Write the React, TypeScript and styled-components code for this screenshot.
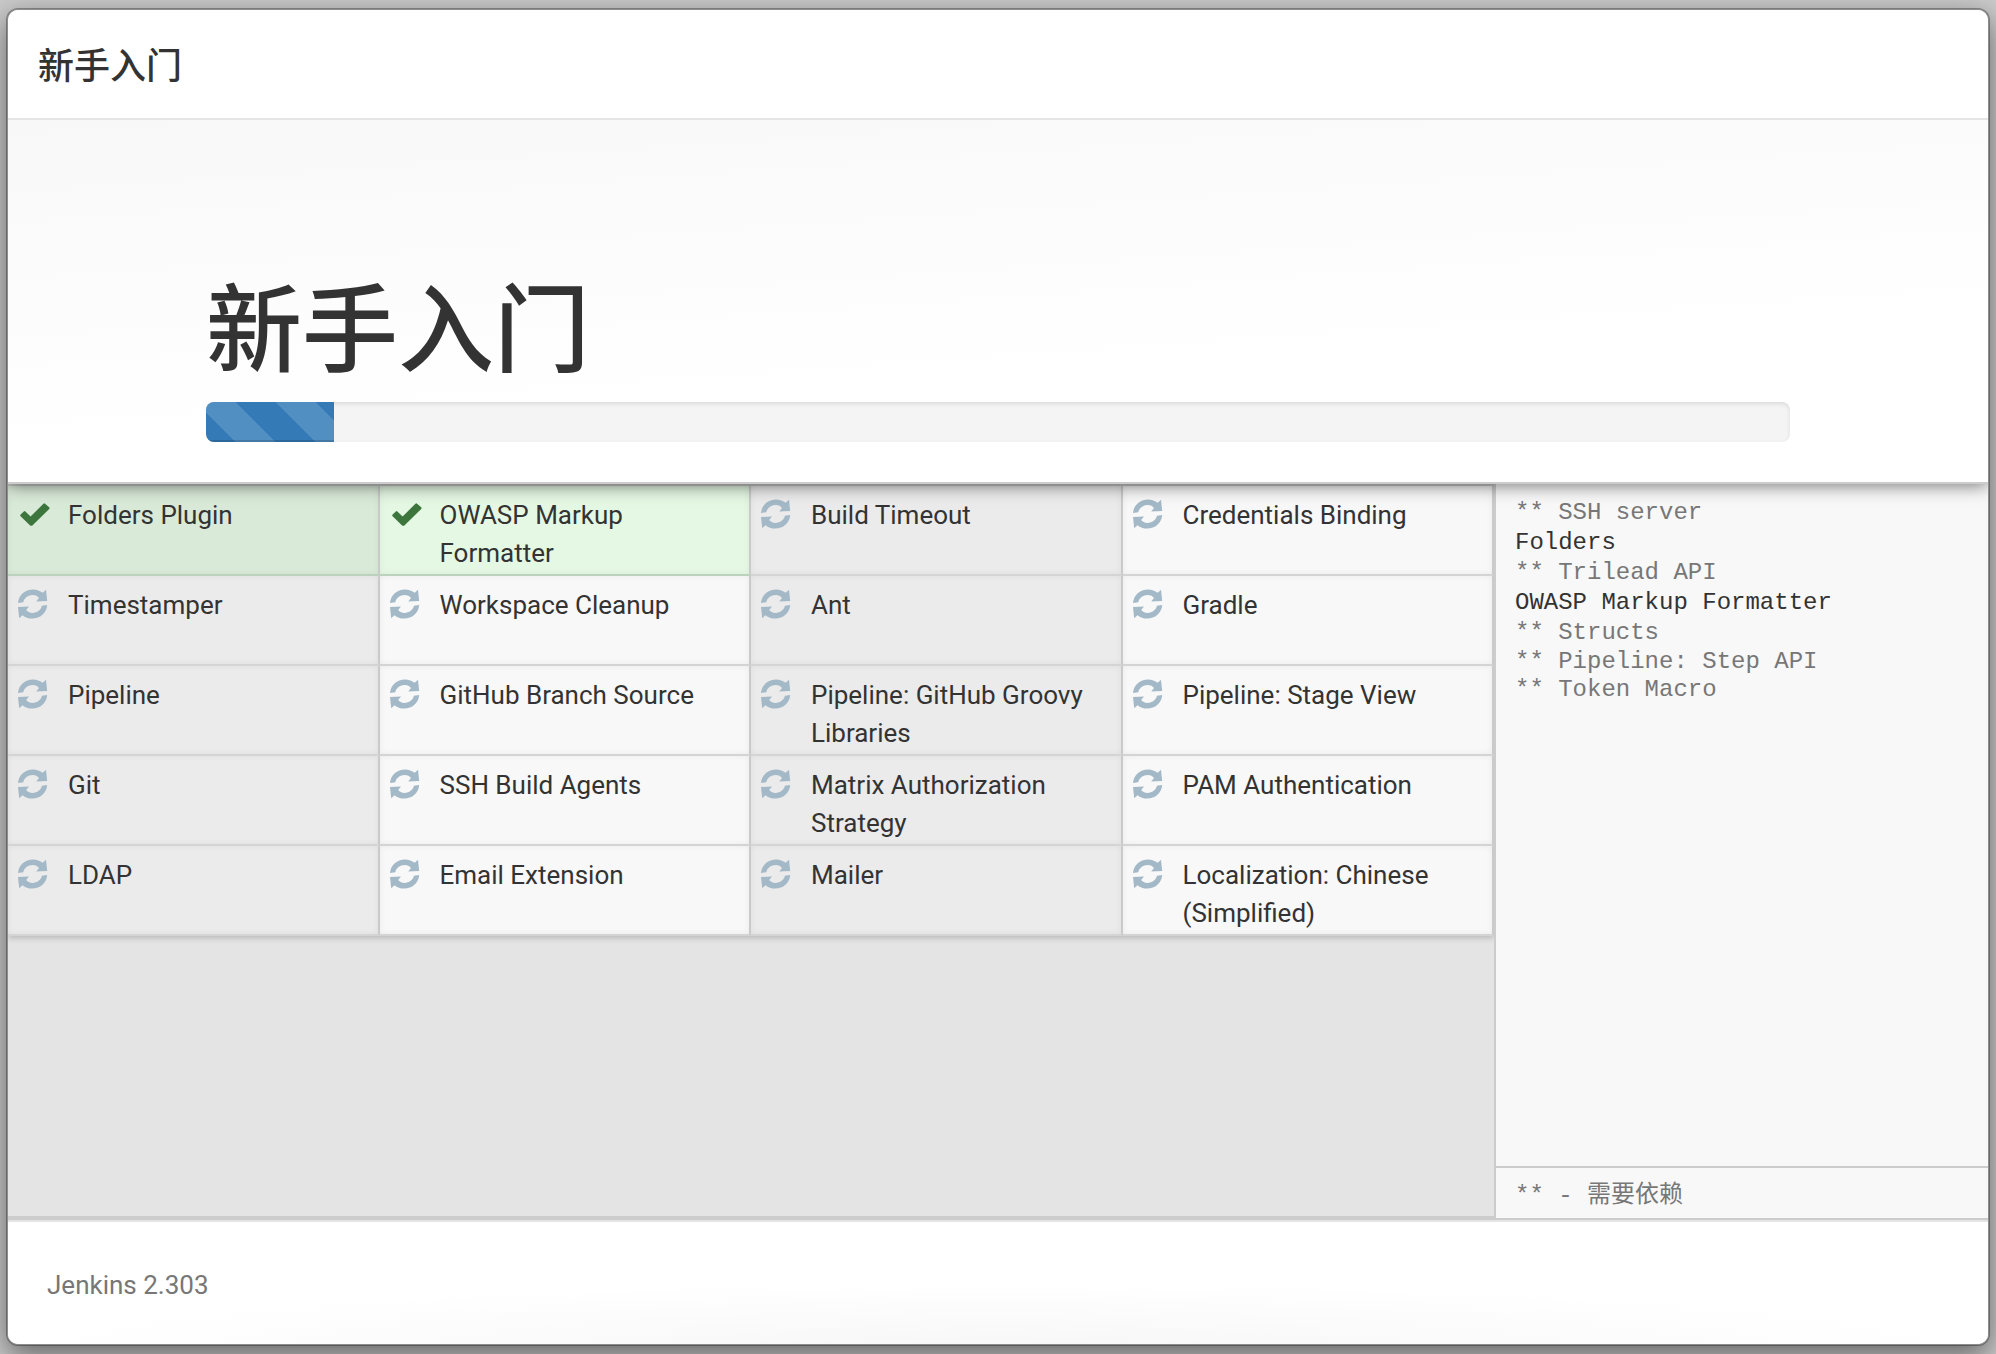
import React from "react";
import styled, { createGlobalStyle, css } from "styled-components";

const sans = `Roboto, "Noto Sans CJK SC", sans-serif`;
const mono = `"Liberation Mono", "Noto Sans CJK SC", monospace`;

const GlobalStyle = createGlobalStyle`
  *, *::before, *::after { box-sizing: border-box; }
  html, body, #root { height: 100%; }
  body {
    margin: 0;
    background: #cbcbcb;
    color: #333;
    font-family: ${sans};
    font-size: 26px;
    line-height: 38px;
  }
`;

const Backdrop = styled.div`
  display: flex;
  min-height: 100%;
  padding: 8px 6px;
`;

const Dialog = styled.main`
  flex: 1;
  min-width: 0;
  display: flex;
  flex-direction: column;
  overflow: hidden;
  border: 2px solid rgba(0, 0, 0, 0.3);
  border-radius: 12px;
  background: #fff;
  background-clip: padding-box;
  box-shadow: 0 10px 30px rgba(0, 0, 0, 0.5);
`;

const Header = styled.header`
  position: relative;
  z-index: 2;
  padding: 31px 30px 25px;
  border-bottom: 2px solid #e5e5e5;
  background: #fff;
`;

const HeaderTitle = styled.h4`
  margin: 0;
  font-size: 36px;
  font-weight: 500;
  line-height: 52px;
`;

const Jumbotron = styled.section`
  position: relative;
  z-index: 1;
  padding: 155px 10% 40px;
  border-bottom: 2px solid #ccc;
  background: linear-gradient(176deg, #f8f8f8, #fff 65%);
  box-shadow: 0 2px 16px rgba(0, 0, 0, 0.5);
`;

const HeroTitle = styled.h1`
  margin: 0 0 15px;
  font-size: 96px;
  font-weight: 500;
  line-height: 112px;
`;

const Progress = styled.div`
  height: 40px;
  overflow: hidden;
  border-radius: 8px;
  background: #f4f4f4;
  box-shadow: inset 0 2px 4px rgba(0, 0, 0, 0.1);
`;

const ProgressBar = styled.div`
  height: 100%;
  background-color: #337ab7;
  background-image: linear-gradient(
    45deg,
    rgba(255, 255, 255, 0.15) 25%,
    transparent 25%,
    transparent 50%,
    rgba(255, 255, 255, 0.15) 50%,
    rgba(255, 255, 255, 0.15) 75%,
    transparent 75%
  );
  background-size: 80px 80px;
  background-position: -10px 0;
  box-shadow: inset 0 -2px 0 rgba(0, 0, 0, 0.15);
`;

const Body = styled.div`
  flex: 1;
  display: flex;
  border-bottom: 2px solid #e5e5e5;
`;

const Selection = styled.div`
  flex: 1;
  min-width: 0;
  border-top: 2px solid #ccc;
  border-bottom: 4px solid #ccc;
  background: #e4e4e4;
`;

const PluginGrid = styled.ul`
  display: grid;
  grid-template-columns: repeat(4, 1fr);
  grid-auto-rows: 90px;
  margin: 0;
  padding: 0;
  list-style: none;
  box-shadow: 0 2px 6px rgba(0, 0, 0, 0.2);
`;

const Plugin = styled.li<{ $done?: boolean }>`
  display: flex;
  gap: 12px;
  padding: 10px 24px 0 10px;
  border-right: 2px solid #cacaca;
  border-bottom: 2px solid #d4d4d4;
  background: #f8f8f8;
  box-shadow: inset 0 0 6px rgba(0, 0, 0, 0.06);

  &:nth-child(odd) {
    background: #ebebeb;
  }

  ${(p) =>
    p.$done &&
    css`
      border-bottom-color: #bdd2bc;
      background: #e5f8e4;

      &:nth-child(odd) {
        background: #daead9;
      }
    `}
`;

const IconSlot = styled.span<{ $done?: boolean }>`
  flex: none;
  width: 38px;
  height: 38px;
  color: ${(p) => (p.$done ? "#3c763d" : "#a3b9c7")};

  svg {
    display: block;
    width: 32px;
    height: 38px;
  }
`;

const Console = styled.aside`
  flex: none;
  width: 494px;
  display: flex;
  flex-direction: column;
  border-left: 2px solid #ccc;
  border-bottom: 2px solid #ccc;
  background: #f8f8f8;
  font-family: ${mono};
  font-size: 24px;
`;

const Log = styled.div`
  flex: 1;
  padding: 14px 19px;
`;

const LogLine = styled.div<{ $dependency?: boolean; $settled?: boolean }>`
  color: ${(p) => (p.$dependency ? "#777" : "#333")};
  line-height: ${(p) => (p.$settled ? 30 : 28)}px;
`;

const Legend = styled.div`
  padding: 9px 19px 3px;
  border-top: 2px solid #ccc;
  color: #777;
`;

const Footer = styled.footer`
  padding: 44px 39px 40px;
  color: #777;
  background: radial-gradient(ellipse 50% 60% at 50% 110%, #f6f6f6, #fff);
`;

const CheckIcon = () => (
  <svg viewBox="0 0 32 38" aria-hidden="true">
    <path
      d="M2.6 18.6 5.8 15.4Q6.6 14.7 7.4 15.4L12.6 20.6 25.4 7.7Q26.3 7 27.1 7.7L31.2 11.2Q32 12 31.2 12.9L14.4 29.4Q13.2 30.2 12.1 29.4L2.6 20.2Q1.9 19.4 2.6 18.6Z"
      fill="currentColor"
    />
  </svg>
);

const RefreshIcon = () => (
  <svg viewBox="0 0 32 38" aria-hidden="true">
    <g fill="currentColor">
      <path d="M0 17C.6 9 7 3.400 15 3.400c3.800 0 7 1.300 9.700 3.400L28 3.800 29.200 15 18.200 15.600 21 12C19.500 10.200 17.600 9.100 14.800 9.100 10 9.100 6 12.300 5.300 16.200Z" />
      <path d="M29.200 19C28.600 27 22.200 32.600 14.200 32.600c-3.800 0-7-1.300-9.700-3.400L1.200 32.200 0 21 11 20.400 8.200 24C9.700 25.800 11.600 26.900 14.400 26.900 19.200 26.900 23.200 23.700 23.900 19.800Z" />
    </g>
  </svg>
);

const plugins: { name: string; done?: boolean }[] = [
  { name: "Folders Plugin", done: true },
  { name: "OWASP Markup Formatter", done: true },
  { name: "Build Timeout" },
  { name: "Credentials Binding" },
  { name: "Timestamper" },
  { name: "Workspace Cleanup" },
  { name: "Ant" },
  { name: "Gradle" },
  { name: "Pipeline" },
  { name: "GitHub Branch Source" },
  { name: "Pipeline: GitHub Groovy Libraries" },
  { name: "Pipeline: Stage View" },
  { name: "Git" },
  { name: "SSH Build Agents" },
  { name: "Matrix Authorization Strategy" },
  { name: "PAM Authentication" },
  { name: "LDAP" },
  { name: "Email Extension" },
  { name: "Mailer" },
  { name: "Localization: Chinese (Simplified)" },
];

const log: { text: string; dependency?: boolean; settled?: boolean }[] = [
  { text: "** SSH server", dependency: true, settled: true },
  { text: "Folders", settled: true },
  { text: "** Trilead API", dependency: true, settled: true },
  { text: "OWASP Markup Formatter", settled: true },
  { text: "** Structs", dependency: true, settled: true },
  { text: "** Pipeline: Step API", dependency: true },
  { text: "** Token Macro", dependency: true },
];

const progress = 8.1;

export default function App() {
  return (
    <>
      <GlobalStyle />
      <Backdrop>
        <Dialog>
          <Header>
            <HeaderTitle>新手入门</HeaderTitle>
          </Header>
          <Jumbotron>
            <HeroTitle>新手入门</HeroTitle>
            <Progress
              role="progressbar"
              aria-valuenow={progress}
              aria-valuemin={0}
              aria-valuemax={100}
            >
              <ProgressBar style={{ width: `${progress}%` }} />
            </Progress>
          </Jumbotron>
          <Body>
            <Selection>
              <PluginGrid>
                {plugins.map((p) => (
                  <Plugin key={p.name} $done={p.done}>
                    <IconSlot $done={p.done}>
                      {p.done ? <CheckIcon /> : <RefreshIcon />}
                    </IconSlot>
                    <span>{p.name}</span>
                  </Plugin>
                ))}
              </PluginGrid>
            </Selection>
            <Console>
              <Log>
                {log.map((l) => (
                  <LogLine key={l.text} $dependency={l.dependency} $settled={l.settled}>
                    {l.text}
                  </LogLine>
                ))}
              </Log>
              <Legend>** - 需要依赖</Legend>
            </Console>
          </Body>
          <Footer>Jenkins 2.303</Footer>
        </Dialog>
      </Backdrop>
    </>
  );
}
